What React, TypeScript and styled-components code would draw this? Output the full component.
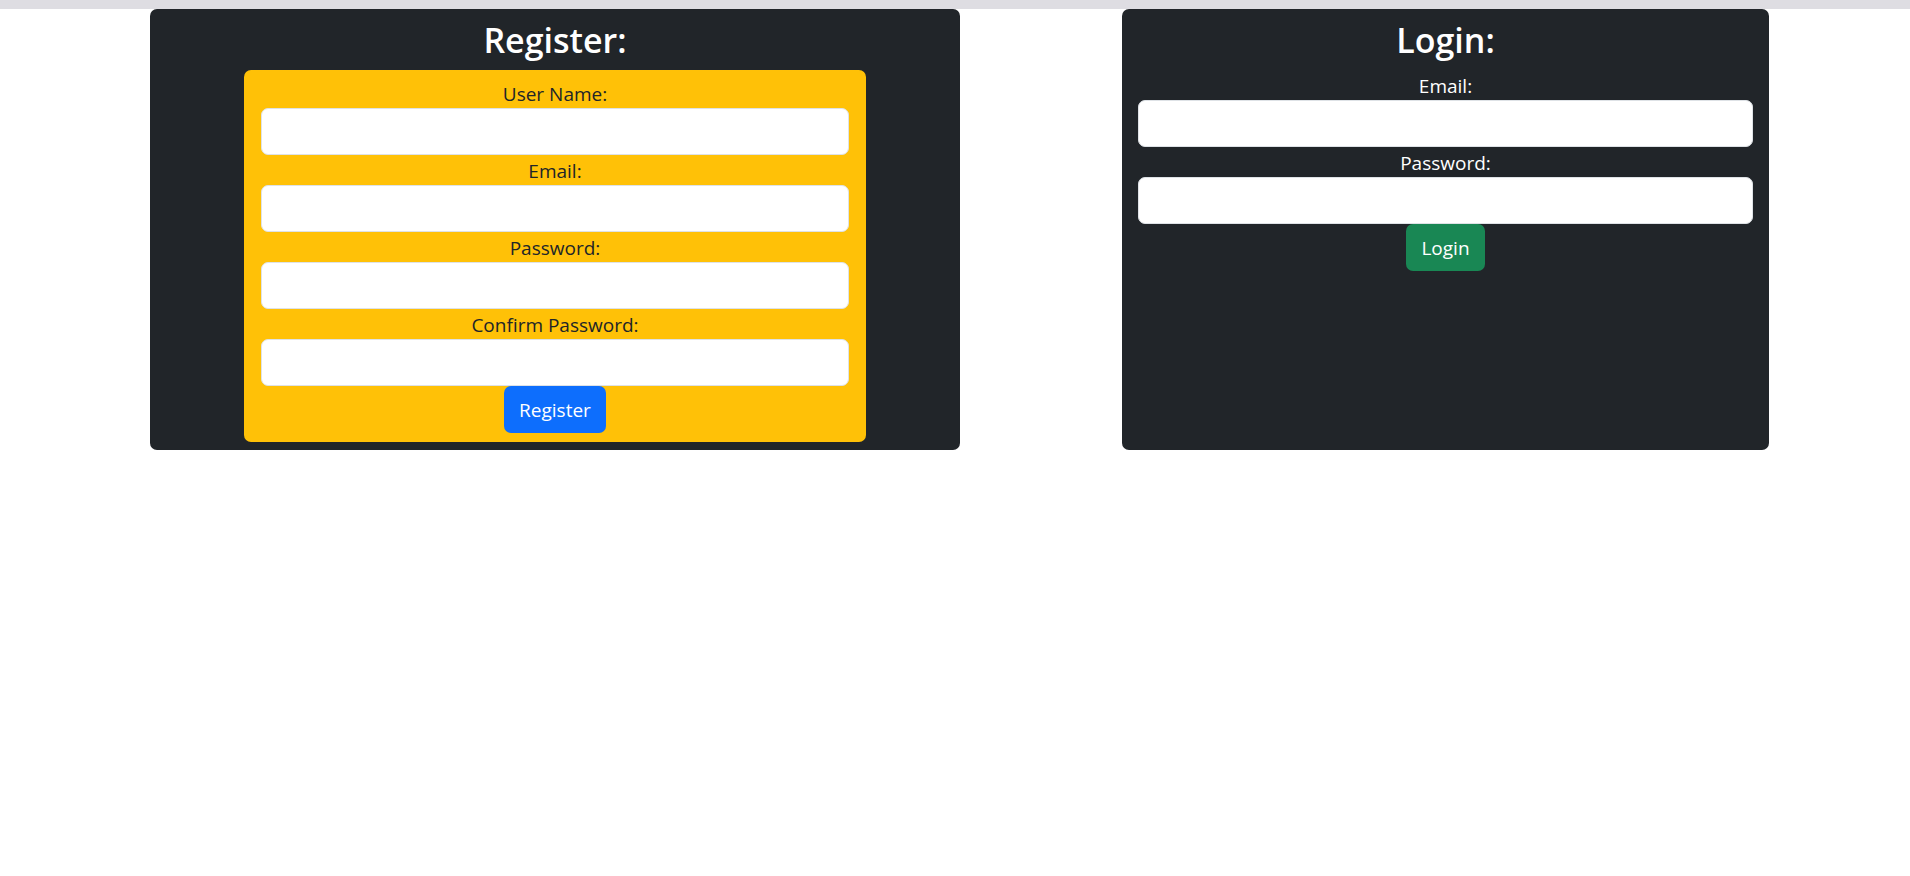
import React from "react";
import styled, { createGlobalStyle } from "styled-components";

const GlobalStyle = createGlobalStyle`
  html, body {
    margin: 0;
    padding: 0;
    background: #ffffff;
    font-family: "Open Sans", "Noto Sans", Arial, sans-serif;
  }
  * { box-sizing: border-box; }
`;

const TopBar = styled.div`
  height: 9px;
  background: #dedde2;
`;

const Row = styled.div`
  display: grid;
  grid-template-columns: 810px 647px;
  column-gap: 162px;
  padding-left: 150px;
  align-items: stretch;
`;

const Card = styled.section<{ $padX: number }>`
  background: #212529;
  border-radius: 7px;
  padding: 11px ${(p) => p.$padX}px 8px;
  display: flex;
  flex-direction: column;
`;

const Title = styled.h3`
  margin: 0 0 9px;
  font-size: 34px;
  line-height: 41px;
  font-weight: 600;
  color: #ffffff;
  text-align: center;
`;

const FormBox = styled.div<{ $tone: "warning" | "plain" }>`
  display: flex;
  flex-direction: column;
  align-items: stretch;
  ${(p) =>
    p.$tone === "warning"
      ? `
    width: 622px;
    margin: 0 auto;
    background: #ffc107;
    border-radius: 7px;
    padding: 8px 17px 9px;
    color: #212529;
  `
      : `
    color: #ffffff;
  `}
`;

const Label = styled.label`
  display: block;
  font-size: 19px;
  line-height: 30px;
  padding-top: 1px;
  height: 30px;
  text-align: center;
`;

const Input = styled.input`
  display: block;
  width: 100%;
  height: 47px;
  border: 1px solid #dee2e6;
  border-radius: 7px;
  background: #ffffff;
  padding: 0 15px;
  font-family: inherit;
  font-size: 19px;
  outline: none;
`;

const Button = styled.button<{ $variant: "primary" | "success" }>`
  align-self: center;
  height: 47px;
  padding: 0 15px;
  border: none;
  border-radius: 7px;
  font-family: inherit;
  font-size: 19px;
  color: #ffffff;
  background: ${(p) => (p.$variant === "primary" ? "#0d6efd" : "#198754")};
  cursor: pointer;
`;

type FieldProps = { id: string; label: string; type?: string };

const Field: React.FC<FieldProps> = ({ id, label, type = "text" }) => (
  <>
    <Label htmlFor={id}>{label}</Label>
    <Input id={id} type={type} />
  </>
);

export default function App() {
  return (
    <>
      <GlobalStyle />
      <TopBar />
      <Row>
        <Card $padX={0}>
          <Title>Register:</Title>
          <FormBox $tone="warning">
            <Field id="reg-user" label="User Name:" />
            <Field id="reg-email" label="Email:" type="email" />
            <Field id="reg-pass" label="Password:" type="password" />
            <Field id="reg-confirm" label="Confirm Password:" type="password" />
            <Button $variant="primary">Register</Button>
          </FormBox>
        </Card>
        <Card $padX={16}>
          <Title>Login:</Title>
          <FormBox $tone="plain">
            <Field id="login-email" label="Email:" type="email" />
            <Field id="login-pass" label="Password:" type="password" />
            <Button $variant="success">Login</Button>
          </FormBox>
        </Card>
      </Row>
    </>
  );
}
